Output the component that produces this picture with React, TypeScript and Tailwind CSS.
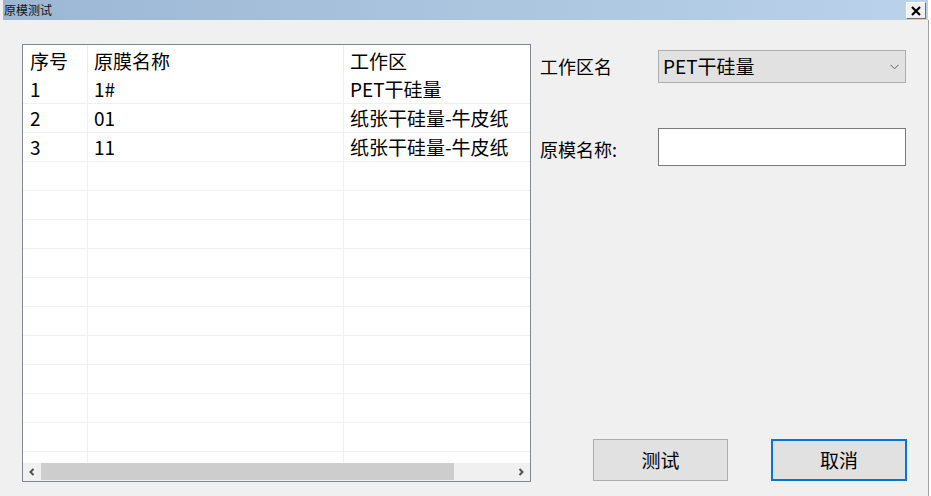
import React from "react";

const rows: [string, string, string][] = [
  ["1", "1#", "PET干硅量"],
  ["2", "01", "纸张干硅量-牛皮纸"],
  ["3", "11", "纸张干硅量-牛皮纸"],
];

const font = { fontFamily: '"Noto Sans CJK SC", "Noto Sans", sans-serif' };

export default function App() {
  const allRows: [string, string, string][] = [...rows];
  while (allRows.length < 14) allRows.push(["", "", ""]);
  return (
    <div className="w-[931px] h-[496px] bg-white overflow-hidden flex text-black" style={font}>
      <div className="w-[928px] h-full bg-[#f0f0f0] flex flex-col">
        {/* title bar */}
        <div className="h-[20px] ml-[3px] flex items-center justify-between bg-gradient-to-r from-[#9cb7d4] to-[#bad2ea]">
          <span className="text-[12px] leading-none pl-[1px] text-[#111]">原模测试</span>
          <div className="w-[20px] h-[17px] mr-[2px] mt-[1px] bg-[#f0f0f0] border-t border-l border-white border-r border-b border-r-[#707070] border-b-[#707070] flex items-center justify-center">
            <svg width="10" height="10" viewBox="0 0 10 10">
              <path d="M1 1 L9 9 M9 1 L1 9" stroke="#000" strokeWidth="2.2" />
            </svg>
          </div>
        </div>
        {/* body */}
        <div className="flex-1 flex pt-[24px] pl-[22px]">
          {/* list */}
          <div className="w-[509px] h-[438px] border border-[#828790] bg-white flex flex-col">
            <div className="h-[418px] overflow-hidden">
              <div className="w-[620px]">
                <div className="flex h-[30px] items-center text-[19px]">
                  <div className="w-[65px] h-full pl-[7px] pt-[2px] flex items-center border-r border-[#ececec]">序号</div>
                  <div className="w-[256px] h-full pl-[6px] pt-[2px] flex items-center border-r border-[#ececec]">原膜名称</div>
                  <div className="flex-1 h-full pl-[6px] pt-[2px] flex items-center">工作区</div>
                </div>
                {allRows.map((r, i) => (
                  <div key={i} className="flex h-[29px] text-[19px] border-b border-[#f0f0f0]">
                    <div className="w-[65px] h-full pl-[7px] flex items-center border-r border-[#f0f0f0]">{r[0]}</div>
                    <div className="w-[256px] h-full pl-[6px] flex items-center border-r border-[#f0f0f0]">{r[1]}</div>
                    <div className="flex-1 h-full pl-[6px] flex items-center">{r[2]}</div>
                  </div>
                ))}
              </div>
            </div>
            {/* scrollbar */}
            <div className="h-[18px] flex bg-[#f0f0f0] pb-[1px]">
              <div className="w-[18px] h-full flex items-center justify-center">
                <svg width="8" height="8" viewBox="0 0 8 8">
                  <path d="M5.5 1 L2.5 4 L5.5 7" stroke="#505050" strokeWidth="2" fill="none" />
                </svg>
              </div>
              <div className="w-[413px] h-full bg-[#cdcdcd]"></div>
              <div className="flex-1"></div>
              <div className="w-[18px] h-full flex items-center justify-center">
                <svg width="8" height="8" viewBox="0 0 8 8">
                  <path d="M2.5 1 L5.5 4 L2.5 7" stroke="#505050" strokeWidth="2" fill="none" />
                </svg>
              </div>
            </div>
          </div>
          {/* right panel */}
          <div className="ml-[9px] h-[438px] flex flex-col">
            <div className="mt-[6px] flex items-center">
              <div className="w-[118px] text-[18px]">工作区名</div>
              <div className="w-[248px] h-[33px] bg-[#e1e1e1] border border-[#adadad] flex items-center justify-between pl-[4px] pr-[6px] text-[19px]">
                <span>PET干硅量</span>
                <svg width="9" height="6" viewBox="0 0 9 6">
                  <path d="M0.5 0.8 L4.5 4.8 L8.5 0.8" stroke="#606060" strokeWidth="1" fill="none" />
                </svg>
              </div>
            </div>
            <div className="mt-[45px] flex items-center">
              <div className="w-[118px] text-[18px] pt-[4px]">原模名称:</div>
              <div className="w-[248px] h-[38px] bg-white border border-[#7a7a7a]"></div>
            </div>
            <div className="mt-auto mb-[1px] ml-[53px] flex gap-[43px]">
              <div className="w-[135px] h-[42px] bg-[#e1e1e1] border border-[#adadad] flex items-center justify-center text-[19px]">测试</div>
              <div className="w-[136px] h-[42px] bg-[#e1e1e1] border-2 border-[#0078d7] flex items-center justify-center text-[19px]">取消</div>
            </div>
          </div>
        </div>
      </div>
      <div className="w-[1px] h-full bg-[#a0a0a0] mt-[20px]"></div>
    </div>
  );
}
